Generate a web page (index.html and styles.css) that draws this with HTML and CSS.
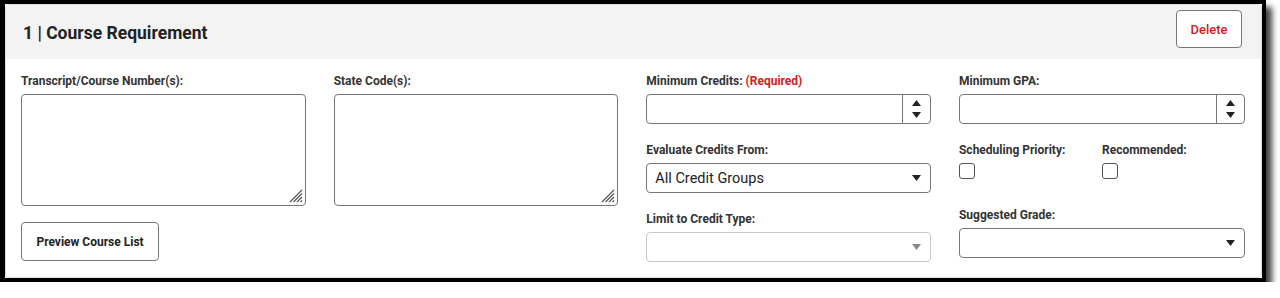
FILE: index.html
```html
<!DOCTYPE html>
<html lang="en">
<head>
<meta charset="UTF-8" />
<title>Course Requirement</title>
<link rel="stylesheet" href="styles.css">
</head>
<body>
<div class="frame">
  <div class="panel">
    <div class="panel-head">
      <h2 class="title">1 | Course Requirement</h2>
      <button class="btn btn-delete">Delete</button>
    </div>

    <div class="panel-body">
      <!-- columna 1 -->
      <div class="col">
        <label class="lbl">Transcript/Course Number(s):</label>
        <div class="textarea">
          <svg class="grip" width="14" height="14" viewBox="0 0 14 14">
            <path d="M13 1 L1 13 M13 4.5 L4.5 13 M13 8 L8 13 M13 11.5 L11.5 13" stroke="#555" stroke-width="1.2" fill="none"/>
          </svg>
        </div>
        <button class="btn btn-preview">Preview Course List</button>
      </div>

      <!-- columna 2 -->
      <div class="col">
        <label class="lbl">State Code(s):</label>
        <div class="textarea">
          <svg class="grip" width="14" height="14" viewBox="0 0 14 14">
            <path d="M13 1 L1 13 M13 4.5 L4.5 13 M13 8 L8 13 M13 11.5 L11.5 13" stroke="#555" stroke-width="1.2" fill="none"/>
          </svg>
        </div>
      </div>

      <!-- columna 3 -->
      <div class="col">
        <div class="field">
          <label class="lbl">Minimum Credits: <span class="req">(Required)</span></label>
          <div class="input num">
            <span class="val"></span>
            <span class="spin">
              <svg width="9" height="6" viewBox="0 0 9 6"><path d="M4.5 0 L9 6 L0 6 Z" fill="#222"/></svg>
              <svg width="9" height="6" viewBox="0 0 9 6"><path d="M0 0 L9 0 L4.5 6 Z" fill="#222"/></svg>
            </span>
          </div>
        </div>
        <div class="field">
          <label class="lbl">Evaluate Credits From:</label>
          <div class="input select">
            <span class="val">All Credit Groups</span>
            <svg class="caret" width="9" height="6" viewBox="0 0 9 6"><path d="M0 0 L9 0 L4.5 6 Z" fill="#222"/></svg>
          </div>
        </div>
        <div class="field">
          <label class="lbl">Limit to Credit Type:</label>
          <div class="input select disabled">
            <span class="val"></span>
            <svg class="caret" width="9" height="6" viewBox="0 0 9 6"><path d="M0 0 L9 0 L4.5 6 Z" fill="#888"/></svg>
          </div>
        </div>
      </div>

      <!-- columna 4 -->
      <div class="col">
        <div class="field">
          <label class="lbl">Minimum GPA:</label>
          <div class="input num">
            <span class="val"></span>
            <span class="spin">
              <svg width="9" height="6" viewBox="0 0 9 6"><path d="M4.5 0 L9 6 L0 6 Z" fill="#222"/></svg>
              <svg width="9" height="6" viewBox="0 0 9 6"><path d="M0 0 L9 0 L4.5 6 Z" fill="#222"/></svg>
            </span>
          </div>
        </div>
        <div class="field checks">
          <div class="check-item">
            <label class="lbl">Scheduling Priority:</label>
            <span class="checkbox"></span>
          </div>
          <div class="check-item">
            <label class="lbl">Recommended:</label>
            <span class="checkbox"></span>
          </div>
        </div>
        <div class="field">
          <label class="lbl">Suggested Grade:</label>
          <div class="input select">
            <span class="val"></span>
            <svg class="caret" width="9" height="6" viewBox="0 0 9 6"><path d="M0 0 L9 0 L4.5 6 Z" fill="#222"/></svg>
          </div>
        </div>
      </div>
    </div>
  </div>
</div>
</body>
</html>
```

FILE: styles.css
```css
* {
  margin: 0; padding: 0; box-sizing: border-box;
}
html, body {
  background: #fff;
  font-family: Roboto, "Liberation Sans", sans-serif;
  color: #222;
}

/* marco negro con sombra */
.frame {
  width: 1266px;
  border-style: solid;
  border-color: #000;
  border-width: 4px 4px 4px 5px;
  box-shadow: 6px 7px 6px rgba(0,0,0,0.75);
}
.panel {
  border: 1px solid #ddd;
  border-radius: 4px;
  background: #fff;
  overflow: hidden;
}
.panel-head {
  background: #f3f3f3;
  display: flex;
  justify-content: space-between;
  align-items: flex-start;
  padding: 5px 19px 10px 17px;
  height: 54px;
}
.title {
  font-size: 17.5px;
  font-weight: 700;
  color: #222;
  line-height: 22px;
  margin-top: 12px;
}
.btn {
  font-family: Roboto, "Liberation Sans", sans-serif;
  background: #fff;
  border: 1px solid #777;
  border-radius: 4px;
  cursor: pointer;
}
.btn-delete {
  width: 66px;
  height: 38px;
  color: #d0211c;
  font-size: 13px;
  font-weight: 500;
}
.btn-preview {
  width: 138px;
  height: 39px;
  margin-top: 16px;
  color: #222;
  font-size: 12px;
  font-weight: 700;
}

.panel-body {
  display: grid;
  grid-template-columns: repeat(4, 1fr);
  column-gap: 28px;
  padding: 14px 16px 15px 15px;
}
.col {
  display: flex;
  flex-direction: column;
  align-items: flex-start;
}
.lbl {
  display: block;
  font-size: 12px;
  font-weight: 700;
  color: #333;
  line-height: 16px;
  margin-bottom: 5px;
}
.req {
  color: #d0211c;
}
.textarea {
  position: relative;
  width: 100%;
  height: 112px;
  border: 1px solid #777;
  border-radius: 4px;
}
.grip {
  position: absolute;
  right: 2px;
  bottom: 2px;
}

.field {
  width: 100%;
  margin-bottom: 18px;
}
.field:last-child {
  margin-bottom: 0;
}
.input {
  width: 100%;
  height: 30px;
  border: 1px solid #777;
  border-radius: 4px;
  display: flex;
  align-items: center;
  background: #fff;
}
.input .val {
  flex: 1;
  font-size: 14.5px;
  color: #222;
  padding-left: 8px;
}
.spin {
  width: 28px;
  height: 100%;
  border-left: 1px solid #777;
  display: flex;
  flex-direction: column;
  align-items: center;
  justify-content: center;
  gap: 6px;
}
.caret {
  margin-right: 9px;
}
.select.disabled {
  border-color: #c8c8c8;
}

.checks {
  display: flex;
}
.check-item {
  width: 143px;
}
.checkbox {
  display: block;
  width: 16px;
  height: 16px;
  border: 1.5px solid #555;
  border-radius: 3px;
  margin-top: 5px;
  margin-bottom: 10px;
}
```
